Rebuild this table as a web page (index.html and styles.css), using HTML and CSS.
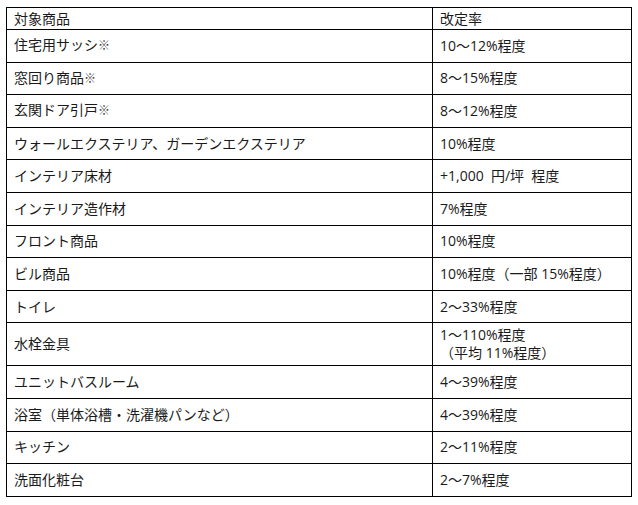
FILE: index.html
```html
<!DOCTYPE html>
<html lang="ja">
<head>
<meta charset="utf-8">
<link rel="stylesheet" href="styles.css">
</head>
<body>
<table class="rates">
  <tr class="head"><td class="c1">対象商品</td><td class="c2">改定率</td></tr>
  <tr><td class="c1">住宅用サッシ<span class="note">※</span></td><td class="c2">10～12%程度</td></tr>
  <tr><td class="c1">窓回り商品<span class="note">※</span></td><td class="c2">8～15%程度</td></tr>
  <tr><td class="c1">玄関ドア引戸<span class="note">※</span></td><td class="c2">8～12%程度</td></tr>
  <tr><td class="c1">ウォールエクステリア、ガーデンエクステリア</td><td class="c2">10%程度</td></tr>
  <tr><td class="c1">インテリア床材</td><td class="c2">+1,000&nbsp; 円/坪&nbsp; 程度</td></tr>
  <tr><td class="c1">インテリア造作材</td><td class="c2">7%程度</td></tr>
  <tr><td class="c1">フロント商品</td><td class="c2">10%程度</td></tr>
  <tr><td class="c1">ビル商品</td><td class="c2">10%程度（一部 15%程度）</td></tr>
  <tr><td class="c1">トイレ</td><td class="c2">2～33%程度</td></tr>
  <tr class="tall"><td class="c1">水栓金具</td><td class="c2">1～110%程度<br>（平均 11%程度）</td></tr>
  <tr><td class="c1">ユニットバスルーム</td><td class="c2">4～39%程度</td></tr>
  <tr><td class="c1">浴室（単体浴槽・洗濯機パンなど）</td><td class="c2">4～39%程度</td></tr>
  <tr><td class="c1">キッチン</td><td class="c2">2～11%程度</td></tr>
  <tr><td class="c1">洗面化粧台</td><td class="c2">2～7%程度</td></tr>
</table>
</body>
</html>
```
FILE: styles.css
```css
html, body {
  margin: 0;
  padding: 0;
  background: #fff;
}
body {
  padding: 7px 0 0 6px;
  font-family: "Open Sans", "Noto Sans CJK JP", sans-serif;
  font-size: 14px;
  color: #1a1a1a;
}
.rates {
  border-collapse: collapse;
  table-layout: fixed;
  width: 625px;
}
.rates td {
  border: 1px solid #000;
  padding: 0 7px;
  height: 31.6px;
  line-height: 18px;
  vertical-align: middle;
}
.rates .c1 { width: 411px; }
.rates .c2 { width: 184px; }
.rates tr.head td {
  height: 21px;
}
.rates tr.tall td {
  height: 42px;
}
.note {
  color: #444;
  font-size: 12px;
}
```
